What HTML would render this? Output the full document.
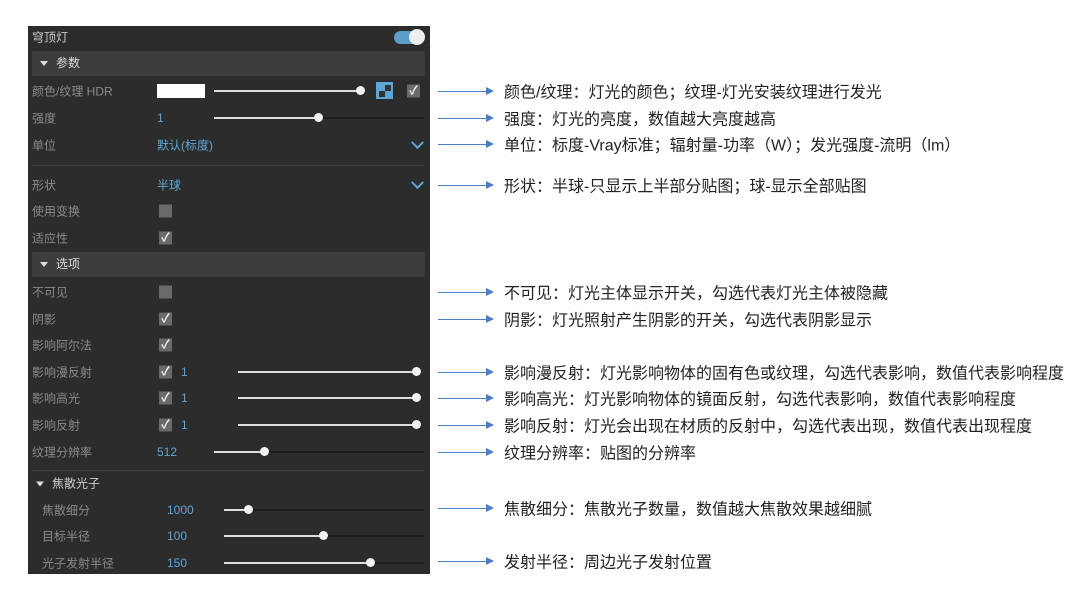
<!DOCTYPE html><html><head><meta charset="utf-8"><style>
body{margin:0;width:1080px;height:613px;background:#fff;position:relative;overflow:hidden;font-family:"Liberation Sans","Noto Sans CJK SC",sans-serif}
.p{position:absolute;left:28px;top:26px;width:402px;height:548px;background:#2c2c2c}
.a{position:absolute}
.l{position:absolute;font-size:12px;color:#8a8a8a;transform:translateY(-50%);white-space:nowrap}
.v{position:absolute;font-size:12px;color:#5ea6d6;transform:translateY(-50%)}
.sec{position:absolute;left:4px;width:393px;height:25px;background:#3d3d3d;color:#ddd;font-size:12px;line-height:25px}
.tri{display:inline-block;width:0;height:0;border-left:4px solid transparent;border-right:4px solid transparent;border-top:5px solid #ddd;margin:0 8px 1px 8px;vertical-align:middle}
.cb{position:absolute;width:13px;height:13px;background:#6a6a6a;transform:translateY(-50%);color:#f0f0f0;font-size:12px;font-weight:bold;line-height:13px;text-align:center}
.tr{position:absolute;height:2px;background:#1e1e1e;transform:translateY(-50%)}
.fill{position:absolute;left:0;top:0;height:2px;background:#ddd}
.k{position:absolute;top:-4px;width:9px;height:9px;border-radius:50%;background:#f2f2f2;margin-left:-4px}
.div{position:absolute;left:4px;width:393px;height:1px;background:#3e3e3e}
.ar{position:absolute;left:438px;width:48px;height:1px;background:#4a7cc7}
.ar:after{content:"";position:absolute;right:-8px;top:-4px;border-left:8px solid #4a7cc7;border-top:4.5px solid transparent;border-bottom:4.5px solid transparent}
.t{position:absolute;left:504px;font-size:16px;color:#222;transform:translateY(-52%);white-space:nowrap}
.chev{position:absolute;left:385px;width:7px;height:7px;border-right:2px solid #5ea6d6;border-bottom:2px solid #5ea6d6;transform:translateY(-75%) rotate(45deg)}
</style></head><body>
<div class="p">
<div class="l" style="left:4px;top:11px;color:#ccc">穹顶灯</div>
<div class="a" style="left:366px;top:5px;width:30px;height:13px;border-radius:7px;background:#5a9fc9"></div>
<div class="a" style="left:381px;top:3px;width:16px;height:16px;border-radius:50%;background:#eee"></div>
<div class="sec" style="top:25px"><span class="tri"></span>参数</div>
<div class="l" style="left:4px;top:65px">颜色/纹理 HDR</div>
<div class="a" style="left:129px;top:58px;width:48px;height:14px;background:#fff"></div>
<div class="tr" style="left:186px;top:65px;width:146px"><div class="fill" style="width:146px"></div><div class="k" style="left:146px"></div></div>
<div class="a" style="left:348px;top:56px;width:17px;height:17px;background:#5ea6d6"><div class="a" style="left:3px;top:9px;width:6px;height:6px;background:#333"></div><div class="a" style="left:9px;top:3px;width:6px;height:6px;background:#333"></div></div>
<div class="cb" style="left:379px;top:65px">✓</div>
<div class="l" style="left:4px;top:92px">强度</div><div class="v" style="left:129px;top:92px">1</div>
<div class="tr" style="left:186px;top:92px;width:210px"><div class="fill" style="width:104px"></div><div class="k" style="left:104px"></div></div>
<div class="l" style="left:4px;top:119px">单位</div><div class="v" style="left:129px;top:119px">默认(标度)</div><div class="chev" style="top:119px"></div>
<div class="div" style="top:139px"></div>
<div class="l" style="left:4px;top:159px">形状</div><div class="v" style="left:129px;top:159px">半球</div><div class="chev" style="top:159px"></div>
<div class="l" style="left:4px;top:185px">使用变换</div><div class="cb" style="left:131px;top:185px"></div>
<div class="l" style="left:4px;top:212px">适应性</div><div class="cb" style="left:131px;top:212px">✓</div>
<div class="sec" style="top:226px"><span class="tri"></span>选项</div>
<div class="l" style="left:4px;top:266px">不可见</div><div class="cb" style="left:131px;top:266px"></div>
<div class="l" style="left:4px;top:293px">阴影</div><div class="cb" style="left:131px;top:293px">✓</div>
<div class="l" style="left:4px;top:319px">影响阿尔法</div><div class="cb" style="left:131px;top:319px">✓</div>
<div class="l" style="left:4px;top:346px">影响漫反射</div><div class="cb" style="left:131px;top:346px">✓</div><div class="v" style="left:153px;top:346px">1</div>
<div class="tr" style="left:210px;top:346px;width:178px"><div class="fill" style="width:178px"></div><div class="k" style="left:178px"></div></div>
<div class="l" style="left:4px;top:372px">影响高光</div><div class="cb" style="left:131px;top:372px">✓</div><div class="v" style="left:153px;top:372px">1</div>
<div class="tr" style="left:210px;top:372px;width:178px"><div class="fill" style="width:178px"></div><div class="k" style="left:178px"></div></div>
<div class="l" style="left:4px;top:399px">影响反射</div><div class="cb" style="left:131px;top:399px">✓</div><div class="v" style="left:153px;top:399px">1</div>
<div class="tr" style="left:210px;top:399px;width:178px"><div class="fill" style="width:178px"></div><div class="k" style="left:178px"></div></div>
<div class="l" style="left:4px;top:426px">纹理分辨率</div><div class="v" style="left:129px;top:426px">512</div>
<div class="tr" style="left:186px;top:426px;width:210px"><div class="fill" style="width:50px"></div><div class="k" style="left:50px"></div></div>
<div class="div" style="top:444px"></div>
<div class="l" style="left:8px;top:457px;color:#ccc"><span class="tri" style="margin-left:0"></span>焦散光子</div>
<div class="l" style="left:14px;top:484px">焦散细分</div><div class="v" style="left:139px;top:484px">1000</div>
<div class="tr" style="left:196px;top:484px;width:200px"><div class="fill" style="width:24px"></div><div class="k" style="left:24px"></div></div>
<div class="l" style="left:14px;top:510px">目标半径</div><div class="v" style="left:139px;top:510px">100</div>
<div class="tr" style="left:196px;top:510px;width:200px"><div class="fill" style="width:99px"></div><div class="k" style="left:99px"></div></div>
<div class="l" style="left:14px;top:537px">光子发射半径</div><div class="v" style="left:139px;top:537px">150</div>
<div class="tr" style="left:196px;top:537px;width:200px"><div class="fill" style="width:146px"></div><div class="k" style="left:146px"></div></div>
</div>
<div class="ar" style="top:91px"></div><div class="t" style="top:91px">颜色/纹理：灯光的颜色；纹理-灯光安装纹理进行发光</div>
<div class="ar" style="top:118px"></div><div class="t" style="top:118px">强度：灯光的亮度，数值越大亮度越高</div>
<div class="ar" style="top:144px"></div><div class="t" style="top:144px">单位：标度-Vray标准；辐射量-功率（W）；发光强度-流明（lm）</div>
<div class="ar" style="top:185px"></div><div class="t" style="top:185px">形状：半球-只显示上半部分贴图；球-显示全部贴图</div>
<div class="ar" style="top:292px"></div><div class="t" style="top:292px">不可见：灯光主体显示开关，勾选代表灯光主体被隐藏</div>
<div class="ar" style="top:319px"></div><div class="t" style="top:319px">阴影：灯光照射产生阴影的开关，勾选代表阴影显示</div>
<div class="ar" style="top:372px"></div><div class="t" style="top:372px">影响漫反射：灯光影响物体的固有色或纹理，勾选代表影响，数值代表影响程度</div>
<div class="ar" style="top:398px"></div><div class="t" style="top:398px">影响高光：灯光影响物体的镜面反射，勾选代表影响，数值代表影响程度</div>
<div class="ar" style="top:425px"></div><div class="t" style="top:425px">影响反射：灯光会出现在材质的反射中，勾选代表出现，数值代表出现程度</div>
<div class="ar" style="top:452px"></div><div class="t" style="top:452px">纹理分辨率：贴图的分辨率</div>
<div class="ar" style="top:508px"></div><div class="t" style="top:508px">焦散细分：焦散光子数量，数值越大焦散效果越细腻</div>
<div class="ar" style="top:561px"></div><div class="t" style="top:561px">发射半径：周边光子发射位置</div>
</body></html>
